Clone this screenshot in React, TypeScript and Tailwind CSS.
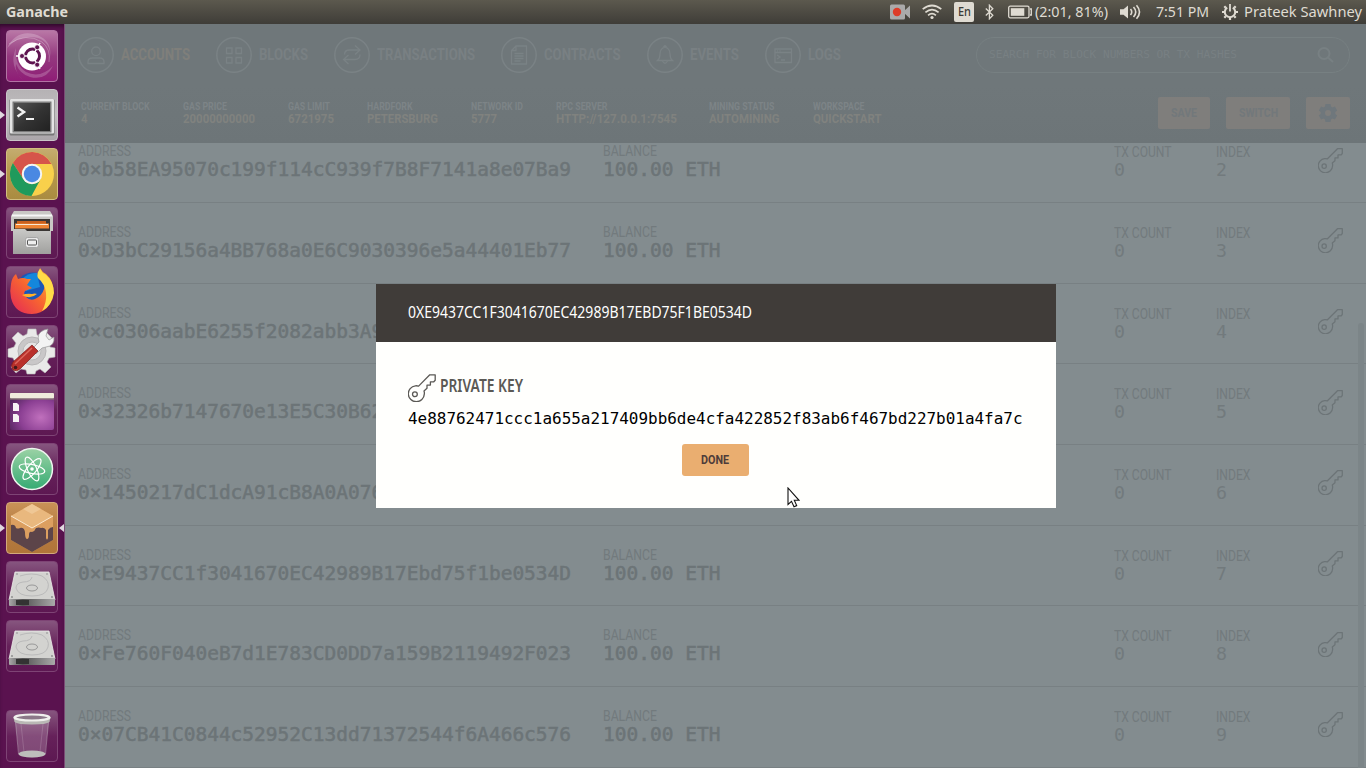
import { useLayoutEffect, useRef, type ReactNode } from "react";

const CONDENSED = "font-['Roboto','Liberation_Sans',sans-serif]";
const MONO = "font-['DejaVu_Sans_Mono','Liberation_Mono',monospace]";
const HUMAN = "font-['Noto_Sans','Open_Sans',sans-serif]";

function Fit({ w, className = "", children }: { w: number; className?: string; children: ReactNode }) {
  const ref = useRef<HTMLSpanElement>(null);
  useLayoutEffect(() => {
    const el = ref.current;
    if (!el) return;
    el.style.transform = "none";
    el.style.transform = `scaleX(${w / el.getBoundingClientRect().width})`;
  }, [w]);
  return (
    <span className={`block shrink-0 whitespace-nowrap ${className}`} style={{ width: w }}>
      <span ref={ref} className="inline-block origin-left align-top">
        {children}
      </span>
    </span>
  );
}

function KeyIcon({ className, stroke }: { className: string; stroke: number }) {
  return (
    <svg viewBox="0 0 28 28" className={className} fill="none" stroke="currentColor" strokeWidth={stroke} strokeLinejoin="round">
      <path d="M21.800 .800h5.400v5.400l-1.400 1.600h-3.400v3.300h-3.400v3.200l-3 2.600c.4 1 .5 2 .3 3.200a8 8 0 1 1-8.900-8.300c1.200-.100 2.200 0 3.200.300Z" />
      <circle cx="6.9" cy="20.300" r="2.400" />
    </svg>
  );
}

/* ---------- top panel ---------- */
function TopPanel() {
  return (
    <header className={`flex h-6 shrink-0 items-center bg-linear-to-b from-[#5c594e] to-[#3f3d38] text-[#dfdbd2] ${HUMAN}`}>
      <Fit w={62} className="ml-1.5 text-[14px] leading-6 font-bold">Ganache</Fit>
      <div className="ml-auto flex items-center pr-1">
        <svg className="h-4 w-5" viewBox="0 0 20 16">
          <rect width="15" height="15" y="0.500" rx="1.5" fill="#aaa" />
          <path d="M13 8l7-6.500v13z" fill="#aaa" />
          <circle cx="7" cy="8" r="4.200" fill="#dd3c28" />
        </svg>
        <svg className="ml-[12px] h-4 w-5" viewBox="0 0 20 16" fill="none" stroke="currentColor" strokeWidth="1.700">
          <path d="M.7 5.200Q10-2.200 19.300 5.200M3.400 8.400Q10 2.800 16.600 8.400M6.100 11.400Q10 8 13.900 11.400" />
          <circle cx="10" cy="13.500" r="1.600" fill="currentColor" stroke="none" />
        </svg>
        <span className="ml-[12px] flex h-5 w-5 items-center justify-center rounded-xs bg-[#dfdbd2] text-[#3c3b37]">
          <Fit w={13} className="text-[12px] leading-5 font-medium">En</Fit>
        </span>
        <svg className="ml-[11px] h-4 w-[9px]" viewBox="0 0 9 16" fill="none" stroke="currentColor" strokeWidth="1.300">
          <path d="M.8 4.500l7 6.800-3.400 3.500V1.200l3.400 3.500-7 6.800" />
        </svg>
        <svg className="ml-[14px] h-[14px] w-6" viewBox="0 0 24 14" fill="none" stroke="currentColor" strokeWidth="1.300">
          <rect x=".700" y="1.200" width="20.300" height="11.600" rx="1.500" />
          <path d="M22 4h1.300v6H22" />
          <rect x="2.800" y="3.200" width="13.500" height="7.600" fill="currentColor" stroke="none" />
        </svg>
        <Fit w={73} className="ml-[3px] text-[14px] leading-6">(2:01, 81%)</Fit>
        <svg className="ml-[12px] h-4 w-[21px]" viewBox="0 0 21 16" fill="none" stroke="currentColor" strokeWidth="1.600">
          <path d="M0 5.200h3.500L8 1.500v13l-4.500-3.700H0z" fill="currentColor" stroke="none" />
          <path d="M10.500 5q2.500 3 0 6M13.500 3q4.500 5 0 10M16.500 1.200q6 6.800 0 13.600" />
        </svg>
        <Fit w={53} className="ml-[15px] text-[14px] leading-6">7:51 PM</Fit>
        <svg className="ml-[13px] h-4 w-4" viewBox="0 0 16 16" fill="none" stroke="currentColor">
          <path d="M5.200 3.600a5.200 5.200 0 1 0 5.600 0" strokeWidth="2" />
          <path d="M8 0v7.500" strokeWidth="1.800" />
          <path d="M0 8h2M14 8h2M8 14v2M2.300 2.300l1.500 1.500M13.700 2.300l-1.500 1.500M2.300 13.700l1.500-1.500M13.700 13.700l-1.500-1.500" strokeWidth="2.200" />
        </svg>
        <Fit w={118} className="ml-[6px] text-[14px] leading-6">Prateek Sawhney</Fit>
      </div>
    </header>
  );
}

/* ---------- launcher ---------- */
function Ubuntu() {
  return (
    <>
      <path d="M1 18Q14 4 32 8Q47 13 43 32Q49 10 28 4Q10 0 1 18z" fill="#fff" fillOpacity=".220" />
      <path d="M18 51Q2 36 10 18Q8 34 20 42Q34 49 47 36Q40 51 24 47Q14 44 10 34Q8 42 18 51z" fill="#fff" fillOpacity=".200" />
      <path d="M3 14Q20 2 36 12Q45 19 43 32" fill="none" stroke="#fff" strokeOpacity=".250" />
      <circle cx="26" cy="26.500" r="14" fill="#fff" />
      <circle cx="26.500" cy="26" r="7" fill="none" stroke="#5e1450" strokeWidth="3" />
      <path d="M26.500 26L10 26M26.500 26l7.500-13M26.500 26l7.500 13" stroke="#fff" strokeWidth="1.500" />
      <circle cx="26.500" cy="26" r="5" fill="#fff" />
      <g fill="#5e1450" stroke="#fff" strokeWidth=".800">
        <circle cx="16" cy="26" r="2.500" />
        <circle cx="31.200" cy="17.300" r="2.500" />
        <circle cx="31.200" cy="34.700" r="2.500" />
      </g>
    </>
  );
}
function Terminal() {
  return (
    <>
      <rect x="3.500" y="10" width="45" height="36.500" rx="1.500" fill="#777" />
      <rect x="4" y="10" width="44" height="34.500" rx="1" fill="#e4e4e4" />
      <rect x="6.500" y="12.500" width="39" height="31" fill="#7b7b7b" />
      <rect x="8" y="14" width="36" height="28" fill="url(#term)" />
      <path d="M11.500 18.500l6.500 4.500-6.500 4.500" fill="none" stroke="#f2f2f2" strokeWidth="2.500" />
      <path d="M20 30h8" stroke="#f2f2f2" strokeWidth="2" />
    </>
  );
}
function Chrome() {
  return (
    <>
      <circle cx="26" cy="26" r="22" fill="#f9d04b" />
      <path d="M6.900 15A22 22 0 0 1 45.500 16H26A10 10 0 0 0 17.300 31Z" fill="#d6544a" />
      <path d="M6.900 15A22 22 0 0 0 25.500 48L34.700 31A10 10 0 0 1 17.300 31Z" fill="#1f9a5c" />
      <circle cx="26" cy="26" r="10.200" fill="#f4f4f4" />
      <circle cx="26" cy="26" r="8.200" fill="#4a88e2" />
    </>
  );
}
function Files() {
  return (
    <>
      <path d="M8 4h36l3 5v15H5V9z" fill="#c9c8c5" />
      <path d="M6 8.500h40" stroke="#f6f6f6" strokeWidth="2" />
      <rect x="8" y="12" width="36" height="13" fill="#3a3634" />
      <rect x="11" y="14" width="29" height="3" fill="#c9601f" />
      <rect x="9" y="16.500" width="34" height="5" fill="#ee8433" />
      <path d="M10 17.500h32" stroke="#f8e8d4" />
      <path d="M7 22h12l2 2h24v23H7z" fill="url(#metal)" />
      <rect x="19.500" y="30.500" width="13" height="10" rx="2" fill="#e8e8e8" stroke="#a5a5a5" />
      <rect x="21.500" y="33" width="9" height="5" rx="1" fill="#eee" stroke="#555" />
    </>
  );
}
function Firefox() {
  return (
    <>
      <circle cx="27" cy="24" r="17.500" fill="#1a57b8" />
      <path d="M16 13q7-7 15-6l3 14-14 4z" fill="#1487dc" />
      <path d="M5 18q1-7 5-10l2 5q5-2 9 0l4 0-4 6 5 3-7 3q-2 3 1 6 4 4 9 2 7-3 9-10 2-7-3-12-3-5-1-9 2 4 6 6 8 7 7 18Q45 47 26 48 9 48 5 32 3.500 25 5 18z" fill="url(#fox)" />
      <path d="M32 12q-2-5 2-9 2 4 6 6 8 7 8 18-2 13-12 18 5-9 4-18-1-9-8-15z" fill="#ffdc48" />
      <path d="M16 29q8 5 15-1-2-1-5 0-5-1-10 1z" fill="#ffb02a" />
    </>
  );
}
function Settings() {
  return (
    <>
      <path d="M22 4h8l1 6 5 2 5-4 6 6-4 5 1 3 5 1v9l-6 1-2 4 4 5-6 6-5-4-4 2-1 3h-8l-1-4-5-1-5 4-5-6 4-5-2-4-5-1v-8l6-2 2-4-4-5 6-6 5 4 4-2z" fill="#e9e9e8" stroke="#bbb" strokeWidth=".600" />
      <circle cx="26" cy="26" r="14" fill="#c9c7c8" stroke="#b8b6b7" />
      <circle cx="26" cy="26" r="9" fill="#e4e3e3" stroke="#bbb" />
      <path d="M26 24l7-7q-3-9 5-12l4-1-2 7 3 4 5-3q1 9-8 10l-4 1-6 6z" fill="#f3f3f3" stroke="#999" strokeWidth=".700" />
      <path d="M26 20l6 6-18 18q-3 3-7 1-3-4 0-8z" fill="#b9302b" stroke="#7d1d1b" strokeWidth=".700" />
      <path d="M26 23L9 39" stroke="#dc665c" strokeWidth="1.500" />
      <circle cx="9.500" cy="42.500" r="1.800" fill="#40191a" />
    </>
  );
}
function Desktop() {
  return (
    <>
      <rect x="4" y="10" width="44" height="36" rx="2" fill="url(#desk)" />
      <rect x="4" y="9" width="44" height="5.500" rx="1" fill="#efecdc" />
      <path d="M4 15h44" stroke="#8a8570" />
      <path d="M7 19h4l2 2v6H7zM7 30h4l2 2v6H7z" fill="#f5f2f5" />
    </>
  );
}
function Atom() {
  return (
    <>
      <circle cx="26" cy="26" r="20.500" fill="url(#atom)" stroke="#eef5ef" strokeWidth="1.500" />
      <g fill="none" stroke="#fff" strokeWidth="1.200">
        <ellipse cx="26" cy="26" rx="13" ry="4.500" transform="rotate(12 26 26)" />
        <ellipse cx="26" cy="26" rx="13" ry="4.500" transform="rotate(65 26 26)" />
        <ellipse cx="26" cy="26" rx="13" ry="4.500" transform="rotate(130 26 26)" />
      </g>
      <circle cx="26" cy="26" r="1.800" fill="#fff" />
    </>
  );
}
function Ganache() {
  return (
    <>
      <path d="M26 2l21 12v24L26 50 5 38V14z" fill="#dc9f60" />
      <path d="M26 2l21 12-21 12L5 14z" fill="#e9b87e" />
      <path d="M26 2l9 5-9 5-9-5z" fill="#f3d0a5" fillOpacity=".600" />
      <path d="M5 23q4-1 5 3 2 1 4 0 4-1 5 4 0 7 2 7t2-4 3-3q3-1 4-4 3-1 5 0 3-1 5 2v8q1 3 2 0V28q2-3 5-3v13L26 50 5 38z" fill="#5c4449" />
      <path d="M5 14l21 12 21-12" fill="none" stroke="#fbe9d0" strokeWidth="1" />
    </>
  );
}
function Disk() {
  return (
    <>
      <path d="M9 11h34l6 28H3z" fill="#d3d3d0" stroke="#ececea" strokeWidth=".800" />
      <path d="M3 38h46v6q0 1-1 1H4q-1 0-1-1z" fill="url(#diskedge)" />
      <path d="M10 39h13v5H10z" fill="#333" />
      <path d="M14 15q12-4 22 0 8 5 6 12-2 8-16 8T10 27q0-5 7-6 8 0 9-5" fill="none" stroke="#bababa" />
      <ellipse cx="26" cy="27" rx="5.500" ry="3" fill="#d2d2cf" stroke="#999" />
      <g fill="#888">
        <circle cx="11" cy="13" r=".800" />
        <circle cx="41" cy="13" r=".800" />
        <circle cx="6" cy="36" r=".900" />
        <circle cx="46" cy="36" r=".900" />
      </g>
    </>
  );
}
function Trash() {
  return (
    <>
      <path d="M9 9l4 36q13 5 26 0l4-36z" fill="#fff" fillOpacity=".200" />
      <path d="M15 14l3 28M37 14l-3 28" stroke="#fff" strokeOpacity=".150" />
      <path d="M9.500 12l3 32M42.500 12l-3 32" stroke="#ddd" strokeOpacity=".350" />
      <ellipse cx="26" cy="44" rx="13.500" ry="3.500" fill="#bdbdbb" />
      <path d="M7.500 7l1 5q3 2.500 17.500 2.500T43.500 12l1-5z" fill="#b9b8b5" />
      <ellipse cx="26" cy="7.500" rx="17.500" ry="3" fill="#8b7888" stroke="#f0f0ed" strokeWidth="2.200" />
    </>
  );
}

const GLASS = "from-[#86557f] via-[#66215a] to-[#5d1852] border-[#7e4475]";
const TILES: { name: string; art: () => ReactNode; tone: string; left?: boolean; right?: boolean }[] = [
  { name: "dash", art: Ubuntu, tone: "from-[#b977a6] via-[#94397f] to-[#8f1c76] border-[#b274a4]" },
  { name: "terminal", art: Terminal, tone: "from-[#b5b2b4] via-[#c2bfc1] to-[#aaa5a9] border-[#c9c5c8]", left: true },
  { name: "chrome", art: Chrome, tone: "from-[#c4ac6f] via-[#b6984a] to-[#a98b41] border-[#d1bd80]", left: true },
  { name: "files", art: Files, tone: GLASS },
  { name: "firefox", art: Firefox, tone: GLASS },
  { name: "settings", art: Settings, tone: GLASS },
  { name: "desktop", art: Desktop, tone: GLASS },
  { name: "atom", art: Atom, tone: GLASS },
  { name: "ganache", art: Ganache, tone: "from-[#c99257] via-[#b67c41] to-[#b07539] border-[#d3a97b]", left: true, right: true },
  { name: "disk-a", art: Disk, tone: GLASS },
  { name: "disk-b", art: Disk, tone: GLASS },
  { name: "trash", art: Trash, tone: GLASS },
];

function Launcher() {
  return (
    <aside className="flex w-[65px] shrink-0 flex-col gap-[7px] border-r border-[#7b4a75] bg-[#5a124f] pt-1.5 shadow-[inset_0_4px_4px_-2px_#2d0828]">
      <svg className="absolute h-0 w-0">
        <defs>
          <linearGradient id="term" x1="0" y1="0" x2="1" y2="1">
            <stop offset="0" stopColor="#555" />
            <stop offset=".5" stopColor="#333" />
            <stop offset="1" stopColor="#222" />
          </linearGradient>
          <linearGradient id="metal" x1="0" y1="0" x2="0" y2="1">
            <stop offset="0" stopColor="#c9c9c7" />
            <stop offset="1" stopColor="#a0a09e" />
          </linearGradient>
          <linearGradient id="fox" x1="1" y1="0" x2="0" y2="1">
            <stop offset="0" stopColor="#ffcf35" />
            <stop offset=".5" stopColor="#f8672f" />
            <stop offset="1" stopColor="#e3245a" />
          </linearGradient>
          <radialGradient id="desk" cx=".7" cy=".65" r=".8">
            <stop offset="0" stopColor="#c070bd" />
            <stop offset=".6" stopColor="#8b3f93" />
            <stop offset="1" stopColor="#54265f" />
          </radialGradient>
          <linearGradient id="atom" x1="0" y1="0" x2="0" y2="1">
            <stop offset="0" stopColor="#9bd2a5" />
            <stop offset="1" stopColor="#35ab73" />
          </linearGradient>
          <linearGradient id="diskedge" x1="0" y1="0" x2="1" y2="0">
            <stop offset="0" stopColor="#aaa" />
            <stop offset=".3" stopColor="#555" />
            <stop offset="1" stopColor="#aaa" />
          </linearGradient>
        </defs>
      </svg>
      {TILES.map(({ name, art: Art, tone, left, right }) => (
        <div key={name} className={`flex h-[52px] items-center ${name === "trash" ? "mt-[31px]" : ""}`}>
          <svg className="mr-px h-2.5 w-[5px]" viewBox="0 0 5 10">
            {left && <path d="M0 1l5 4-5 4z" fill="#e0d8df" />}
          </svg>
          <div className={`h-[52px] w-[52px] overflow-hidden rounded-[4px] border bg-linear-to-b ${tone}`}>
            <svg viewBox="0 0 52 52" className="-m-px h-[52px] w-[52px] max-w-none">
              <Art />
            </svg>
          </div>
          <svg className="ml-px h-2.5 w-[5px]" viewBox="0 0 5 10">
            {right && <path d="M5 1L0 5l5 4z" fill="#e0d8df" />}
          </svg>
        </div>
      ))}
    </aside>
  );
}

/* ---------- application ---------- */
const NAV = [
  { label: "ACCOUNTS", w: 69, icon: <><circle cx="18" cy="14.300" r="4.300" /><path d="M10 26.500v-1.500q0-4 4.500-4h7q4.500 0 4.500 4v1.500z" /></> },
  { label: "BLOCKS", w: 49, icon: <path d="M10.500 11h5.500v5.500h-5.500zM20 11h5.500v5.500H20zM10.500 20.500h5.500V26h-5.500zM20 20.500h5.500V26H20z" /> },
  { label: "TRANSACTIONS", w: 98, icon: <><path d="M10.500 17.500q0-4.500 5-4.500h10.500M21 8.500l5 4.500-5 4.500" /><path d="M26 17.500q0 5-5 5H9.500M14.500 18l-5 4.500 5 4.500" /></> },
  { label: "CONTRACTS", w: 76.5, icon: <><path d="M15 9h10.500v18h-15V13.500zM15 9v4.500h-4.500" /><path d="M13.500 16.500h9M13.500 19h9M13.500 21.500h9M13.500 24h6" /></> },
  { label: "EVENTS", w: 49, icon: <><path d="M10.500 23.500q2.500-2 2.500-6.500 0-5.500 5-7 5 1.500 5 7 0 4.500 2.500 6.500zM16.500 10q1.500-2.500 3 0" /><path d="M15.500 24q2.500 4.500 5 0" /></> },
  { label: "LOGS", w: 33, icon: <><path d="M10 12h16.500v13.500H10zM10 15.500h16.500M12 13.800h1M14.500 13.800h1" /><path d="M12 18l3 2-3 2M16 23h4" /></> },
];

const INFO = [
  { label: "CURRENT BLOCK", lw: 68.5, value: "4", vw: 6.5, col: 102 },
  { label: "GAS PRICE", lw: 44, value: "20000000000", vw: 72, col: 105 },
  { label: "GAS LIMIT", lw: 42, value: "6721975", vw: 46, col: 79 },
  { label: "HARDFORK", lw: 45.5, value: "PETERSBURG", vw: 71, col: 104 },
  { label: "NETWORK ID", lw: 52, value: "5777", vw: 26, col: 84.5 },
  { label: "RPC SERVER", lw: 51.5, value: "HTTP://127.0.0.1:7545", vw: 121, col: 153.5 },
  { label: "MINING STATUS", lw: 65.5, value: "AUTOMINING", vw: 70.5, col: 103.5 },
  { label: "WORKSPACE", lw: 51.5, value: "QUICKSTART", vw: 68.5, col: 80 },
];

const ACCOUNTS: { address: string; balance?: string }[] = [
  { address: "0×b58EA95070c199f114cC939f7B8F7141a8e07Ba9", balance: "100.00 ETH" },
  { address: "0×D3bC29156a4BB768a0E6C9030396e5a44401Eb77", balance: "100.00 ETH" },
  { address: "0×c0306aabE6255f2082abb3A9" },
  { address: "0×32326b7147670e13E5C30B62" },
  { address: "0×1450217dC1dcA91cB8A0A076" },
  { address: "0×E9437CC1f3041670EC42989B17Ebd75f1be0534D", balance: "100.00 ETH" },
  { address: "0×Fe760F040eB7d1E783CD0DD7a159B2119492F023", balance: "100.00 ETH" },
  { address: "0×07CB41C0844c52952C13dd71372544f6A466c576", balance: "100.00 ETH" },
];

function AppHeader() {
  return (
    <div className={`relative flex h-[119px] shrink-0 flex-col bg-[#6f777a] ${CONDENSED}`}>
      <nav className="flex h-[62px] items-center gap-[26px] pr-4 pl-[13px]">
        {NAV.map((n, i) => (
          <div key={n.label} className={`flex items-center gap-[7px] ${i === 0 ? "text-[#7f7f7b]" : "text-[#798083]"}`}>
            <svg viewBox="0 0 36 36" className="h-9 w-9 text-[#7a8285]" fill="none" stroke="currentColor" strokeWidth="1.300">
              <circle cx="18" cy="18" r="17.200" strokeWidth="1.500" />
              {n.icon}
            </svg>
            <Fit w={n.w} className="-mt-px text-[16px] leading-5 font-bold">{n.label}</Fit>
          </div>
        ))}
        <div className="ml-auto flex h-9 w-[374px] items-center rounded-full border border-[#778082] pr-[15px] pl-3 text-[#788083]">
          <Fit w={248} className={`text-[11px] leading-4 ${MONO}`}>SEARCH FOR BLOCK NUMBERS OR TX HASHES</Fit>
          <svg viewBox="0 0 18 18" className="ml-auto h-[18px] w-[18px]" fill="none" stroke="currentColor" strokeWidth="2">
            <circle cx="8" cy="7.500" r="5.500" />
            <path d="M12 11.500l5 4.500" />
          </svg>
        </div>
      </nav>
      <div className="flex flex-1 items-start bg-linear-to-b from-[#6f777a] to-[#6d7578] pt-[11px] pr-4 pl-4">
        {INFO.map((f) => (
          <div key={f.label} className="shrink-0 pt-1" style={{ width: f.col }}>
            <Fit w={f.lw} className="text-[11px] leading-3 font-bold text-[#7d8487]">{f.label}</Fit>
            <Fit w={f.vw} className="text-[12px] leading-3 font-bold text-[#80827f]">{f.value}</Fit>
          </div>
        ))}
        <div className="ml-auto flex gap-4 text-[#72787b]">
          <span className="flex h-8 w-[52px] items-center justify-center rounded-[2px] bg-[#7f7e7c]">
            <Fit w={26} className="text-[12px] font-bold">SAVE</Fit>
          </span>
          <span className="flex h-8 w-16 items-center justify-center rounded-[2px] bg-[#7f7e7c]">
            <Fit w={39} className="text-[12px] font-bold">SWITCH</Fit>
          </span>
          <span className="flex h-8 w-11 items-center justify-center rounded-[2px] bg-[#7f7e7c] text-[#6f777c]">
            <svg viewBox="0 0 20 20" className="h-5 w-5" fill="currentColor">
              <path fillRule="evenodd" d="M7.500 1h5l.500 2.500 1.500.900 2.400-.900 2.300 4-1.900 1.600v1.800l1.900 1.600-2.300 4-2.400-.900-1.500.900-.500 2.500h-5L7 16.500l-1.500-.900-2.400.900-2.300-4 1.900-1.600V9.100L.800 7.500l2.300-4 2.400.900L7 3.500zM10 7a3 3 0 1 0 0 6 3 3 0 0 0 0-6z" />
            </svg>
          </span>
        </div>
      </div>
    </div>
  );
}

function Cell({ label, lw, children, shift = false }: { label: string; lw: number; children: ReactNode; shift?: boolean }) {
  return (
    <div className={shift ? "pt-px" : ""}>
      <Fit w={lw} className={`text-[14.5px] leading-4 ${CONDENSED}`}>{label}</Fit>
      <div className={`-mt-px ${MONO}`}>{children}</div>
    </div>
  );
}

function AccountRow({ address, balance, index }: { address: string; balance?: string; index: number }) {
  return (
    <div className="grid h-[80.670px] shrink-0 grid-cols-[524.500px_511px_102px_102px_auto] border-b border-[#788083] pt-[22px] pl-[13px] text-[#727a7d]">
      <Cell label="ADDRESS" lw={53}>
        <Fit w={address.length * 11.74} className="text-[19px] leading-5 text-[#6c7477] [-webkit-text-stroke:0.5px_#6c7477]">{address}</Fit>
      </Cell>
      {balance ? (
        <Cell label="BALANCE" lw={54}>
          <Fit w={117.5} className="text-[19px] leading-5 text-[#6c7477] [-webkit-text-stroke:0.5px_#6c7477]">{balance}</Fit>
        </Cell>
      ) : (
        <div />
      )}
      <Cell label="TX COUNT" lw={57.5} shift>
        <Fit w={11} className="text-[18px] leading-5">0</Fit>
      </Cell>
      <Cell label="INDEX" lw={34.5} shift>
        <Fit w={11} className="text-[18px] leading-5">{index}</Fit>
      </Cell>
      <KeyIcon className="mt-[3.500px] h-[25px] w-[25px] text-[#6c7477]" stroke={1.4} />
    </div>
  );
}

function KeyDialog() {
  return (
    <div className="absolute inset-0 flex items-center justify-center pl-px">
      <div className="h-[224px] w-[680px] bg-[#fffffd]">
        <div className={`flex h-[58px] items-center bg-[#403c39] pb-0.5 pl-[31.500px] text-white ${HUMAN}`}>
          <Fit w={344} className="text-[16px] leading-6">0XE9437CC1F3041670EC42989B17EBD75F1BE0534D</Fit>
        </div>
        <div className="flex flex-col items-start px-8 pt-[31px]">
          <div className="flex h-[30px] items-center gap-1 text-[#5b5955]">
            <KeyIcon className="h-7 w-7" stroke={1.3} />
            <Fit w={83} className={`-mt-1 text-[17px] leading-6 font-semibold ${HUMAN}`}>PRIVATE KEY</Fit>
          </div>
          <Fit w={614.5} className={`mt-1.5 text-[16px] leading-5 text-black ${MONO}`}>
            4e88762471ccc1a655a217409bb6de4cfa422852f83ab6f467bd227b01a4fa7c
          </Fit>
          <button className={`mt-[15px] mr-0.5 flex h-8 w-[67px] items-center justify-center self-center rounded-[3px] bg-[#eaae70] text-[#4e3c3a] ${CONDENSED}`}>
            <Fit w={28} className="text-[12px] font-bold">DONE</Fit>
          </button>
        </div>
      </div>
    </div>
  );
}

export default function App() {
  return (
    <div className="relative flex h-[768px] w-[1366px] flex-col overflow-hidden bg-[#838c8f]">
      <TopPanel />
      <div className="flex min-h-0 flex-1">
        <Launcher />
        <main className="relative flex min-w-0 flex-1 flex-col overflow-hidden">
          <AppHeader />
          <section className="relative min-h-0 flex-1 overflow-hidden">
            <div className="-mt-[20.700px] flex flex-col">
              {ACCOUNTS.map((a, i) => (
                <AccountRow key={a.address} address={a.address} balance={a.balance} index={i + 2} />
              ))}
            </div>
            <div className="absolute top-[180px] right-0.5 bottom-0 w-1.5 rounded-t-full bg-[#7c8588]" />
          </section>
          <KeyDialog />
        </main>
      </div>
      <svg viewBox="0 0 13 21" className="absolute top-[487px] left-[786.500px] h-[21px] w-[13px]">
        <path d="M1 1v16.500l3.500-3.200 2.500 5.500 2.700-1.200-2.400-5.300H12z" fill="#fff" stroke="#111" strokeWidth="1.100" />
      </svg>
    </div>
  );
}
